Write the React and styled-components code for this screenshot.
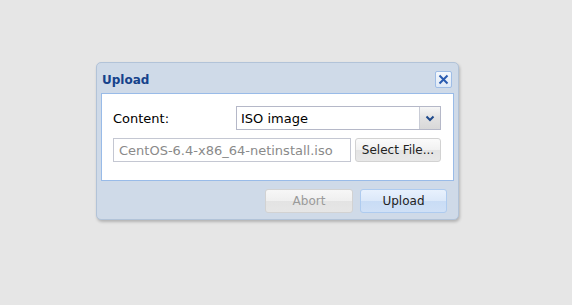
import React from "react";
import styled, { createGlobalStyle } from "styled-components";

const GlobalStyle = createGlobalStyle`
  html, body {
    margin: 0;
    padding: 0;
    background: #e6e6e6;
    font-family: "DejaVu Sans", Verdana, sans-serif;
  }
`;

const Page = styled.div`
  width: 572px;
  height: 305px;
  padding: 62px 0 0 96px;
  box-sizing: border-box;
`;

const Window = styled.div`
  width: 363px;
  height: 158px;
  box-sizing: border-box;
  background: #cfdae8;
  border: 1px solid #b2c3d8;
  border-radius: 5px;
  box-shadow: 1px 2px 3px rgba(0, 0, 0, 0.22);
  display: flex;
  flex-direction: column;
  padding: 0 4px 0 4px;
`;

const Header = styled.div`
  height: 30px;
  display: flex;
  align-items: center;
  justify-content: space-between;
  padding: 0 2px 0 1px;
`;

const Title = styled.span`
  font-size: 12px;
  font-weight: bold;
  color: #15428b;
  padding-top: 3px;
`;

const CloseButton = styled.button`
  width: 17px;
  height: 17px;
  padding: 0;
  margin-top: 2px;
  border: 1px solid #9fbde6;
  border-radius: 2px;
  background: linear-gradient(#f4f8fd, #dfe9f6);
  display: flex;
  align-items: center;
  justify-content: center;
`;

const Body = styled.div`
  background: #fff;
  border: 1px solid #99bbe8;
  height: 88px;
  box-sizing: border-box;
  padding: 12px 12px 0 11px;
  display: flex;
  flex-direction: column;
  gap: 8px;
`;

const Row = styled.div`
  display: flex;
  align-items: center;
  gap: ${(p) => p.$gap || 0}px;
`;

const Label = styled.span`
  width: 123px;
  font-size: 13px;
  color: #000;
`;

const Combo = styled.div`
  width: 205px;
  height: 24px;
  box-sizing: border-box;
  border: 1px solid #b5b8c8;
  display: flex;
`;

const ComboText = styled.div`
  flex: 1;
  font-size: 13px;
  line-height: 23px;
  padding-left: 4px;
  color: #000;
`;

const Trigger = styled.div`
  width: 20px;
  border-left: 1px solid #c9ccd6;
  background: linear-gradient(#f6f6f6, #e2e2e2 50%, #d8d8d8);
  display: flex;
  align-items: center;
  justify-content: center;
`;

const TextField = styled.div`
  width: 238px;
  height: 24px;
  box-sizing: border-box;
  border: 1px solid #c4c7d2;
  font-size: 13px;
  line-height: 23px;
  padding-left: 5px;
  color: #8a8a8a;
  white-space: nowrap;
  overflow: hidden;
`;

const Button = styled.button`
  width: ${(p) => p.$w}px;
  height: 24px;
  box-sizing: border-box;
  padding: 0;
  font-family: "DejaVu Sans", Verdana, sans-serif;
  font-size: 12px;
  border-radius: 3px;
  border: 1px solid ${(p) => (p.$primary ? "#aecbef" : "#d2d2d2")};
  color: ${(p) => (p.$disabled ? "#9a9a9a" : "#222")};
  background: ${(p) =>
    p.$primary
      ? "linear-gradient(#e8f1fd 0%, #dbe8f9 50%, #c9dcf5 51%, #cfe0f6 100%)"
      : p.$disabled
      ? "linear-gradient(#f7f7f7 0%, #efefef 50%, #e3e3e3 51%, #e6e6e6 100%)"
      : "linear-gradient(#fbfbfb 0%, #f1f1f1 50%, #e3e3e3 51%, #e8e8e8 100%)"};
`;

const Footer = styled.div`
  flex: 1;
  display: flex;
  justify-content: flex-end;
  align-items: flex-start;
  gap: 7px;
  padding: 8px 7px 0 0;
`;

export default function App() {
  return (
    <>
      <GlobalStyle />
      <Page>
        <Window>
          <Header>
            <Title>Upload</Title>
            <CloseButton>
              <svg width="11" height="11" viewBox="0 0 11 11">
                <path d="M1.5 1.5 L9.5 9.5 M9.5 1.5 L1.5 9.5" stroke="#2a5bb0" strokeWidth="2" />
              </svg>
            </CloseButton>
          </Header>
          <Body>
            <Row>
              <Label>Content:</Label>
              <Combo>
                <ComboText>ISO image</ComboText>
                <Trigger>
                  <svg width="10" height="7" viewBox="0 0 10 7">
                    <path d="M1.5 1.5 L5 5 L8.5 1.5" stroke="#1f4a8c" strokeWidth="2" fill="none" />
                  </svg>
                </Trigger>
              </Combo>
            </Row>
            <Row $gap={4}>
              <TextField>CentOS-6.4-x86_64-netinstall.iso</TextField>
              <Button $w={86}>Select File...</Button>
            </Row>
          </Body>
          <Footer>
            <Button $w={88} $disabled>Abort</Button>
            <Button $w={87} $primary>Upload</Button>
          </Footer>
        </Window>
      </Page>
    </>
  );
}
